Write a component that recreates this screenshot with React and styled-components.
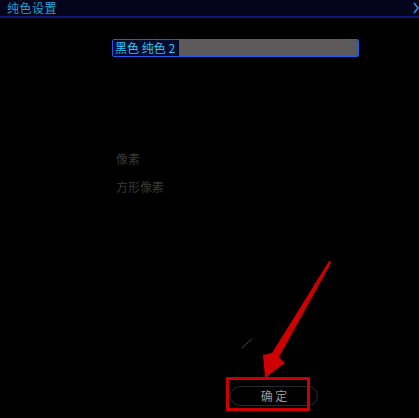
import React from "react";
import styled, { createGlobalStyle } from "styled-components";

const GlobalStyle = createGlobalStyle`
  html, body {
    margin: 0;
    padding: 0;
    background: #000;
  }
  body {
    font-family: "Noto Sans CJK SC", "Noto Sans", sans-serif;
  }
`;

const options = ["像素", "方形像素"];

const App = () => {
  return (
    <Page>
      <GlobalStyle />
      <TitleBar>
        <Title>纯色设置</Title>
        <Chevron viewBox="0 0 6 12">
          <path d="M1 1 L5 6 L1 11" fill="none" stroke="#1aa0ff" strokeWidth="1.4" />
        </Chevron>
      </TitleBar>

      <Body>
        <Dropdown>
          <Selected>黑色 纯色 2</Selected>
          <Track />
        </Dropdown>

        <OptionList>
          {options.map((item) => (
            <Option key={item}>{item}</Option>
          ))}
        </OptionList>

        <Footer>
          <ConfirmButton>确 定</ConfirmButton>
        </Footer>
      </Body>

      {/* annotation overlay */}
      <Stroke viewBox="0 0 14 12">
        <path d="M2 11 L12 2" stroke="#3a3a3a" strokeWidth="1.5" strokeDasharray="2 1" />
      </Stroke>
      <Arrow viewBox="0 0 419 418">
        <polygon
          points="330,261 331,263 279,357 285,363 265,378 263,355 272,353 329,261"
          fill="#cc0000"
        />
      </Arrow>
      <Highlight />
    </Page>
  );
};

const Page = styled.div`
  position: relative;
  width: 419px;
  height: 418px;
  background: #000;
  overflow: hidden;
  display: flex;
  flex-direction: column;
`;

const TitleBar = styled.div`
  height: 16px;
  background: #03031c;
  border-bottom: 2px solid #10187a;
  display: flex;
  align-items: center;
  justify-content: space-between;
  padding: 0 0 0 7px;
`;

const Title = styled.div`
  color: #1fa6d2;
  font-size: 12px;
  line-height: 16px;
  letter-spacing: 0.5px;
`;

const Chevron = styled.svg`
  width: 6px;
  height: 12px;
  margin-right: 0;
`;

const Body = styled.div`
  flex: 1;
  display: flex;
  flex-direction: column;
  padding-left: 112px;
`;

const Dropdown = styled.div`
  margin-top: 21px;
  width: 245px;
  height: 16px;
  display: flex;
  border: 1px solid #1c5cf0;
  border-radius: 2px;
  overflow: hidden;
`;

const Selected = styled.div`
  width: 64px;
  background: #020a2e;
  border-right: 1px solid #1c5cf0;
  color: #30c8f0;
  font-size: 12px;
  line-height: 16px;
  padding-left: 2px;
  white-space: nowrap;
`;

const Track = styled.div`
  flex: 1;
  background: linear-gradient(90deg, #5e5a5c 0%, #5e5a5c 92%, #545c5c 100%);
`;

const OptionList = styled.div`
  display: flex;
  flex-direction: column;
  gap: 10px;
  margin-top: 93px;
  padding-left: 4px;
`;

const Option = styled.div`
  color: #383838;
  font-size: 12px;
  line-height: 18px;
`;

const Footer = styled.div`
  margin-top: auto;
  margin-bottom: 12px;
  padding-left: 118px;
`;

const ConfirmButton = styled.div`
  width: 86px;
  height: 18px;
  border: 1px solid #2a2a2a;
  border-radius: 10px;
  color: #9a9a9a;
  font-size: 12px;
  line-height: 18px;
  text-align: center;
`;

const Arrow = styled.svg`
  position: absolute;
  left: 0;
  top: 0;
  width: 419px;
  height: 418px;
  pointer-events: none;
`;

const Stroke = styled.svg`
  position: absolute;
  left: 240px;
  top: 337px;
  width: 14px;
  height: 12px;
`;

const Highlight = styled.div`
  position: absolute;
  left: 226px;
  top: 377px;
  width: 78px;
  height: 28px;
  border: 3px solid #cc0000;
`;

export default App;
